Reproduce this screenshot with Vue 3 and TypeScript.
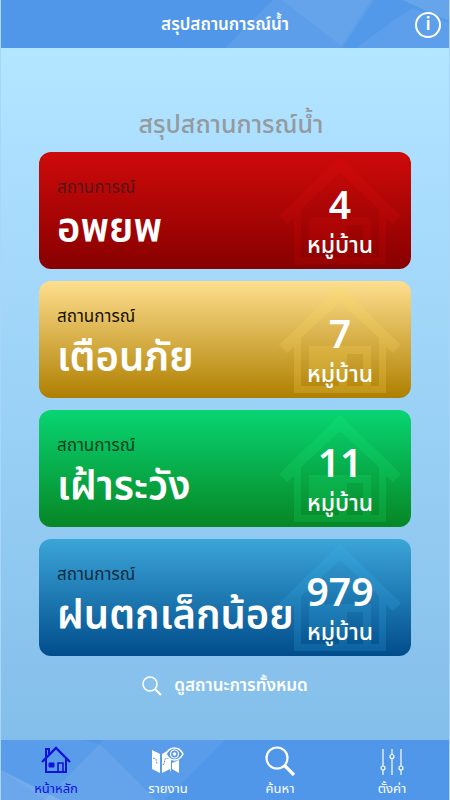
<script setup lang="ts">
import { ref } from 'vue'

interface Status {
  id: string
  name: string
  count: number
}

const statuses: Status[] = [
  { id: 'evacuate', name: 'อพยพ', count: 4 },
  { id: 'warning', name: 'เตือนภัย', count: 7 },
  { id: 'watch', name: 'เฝ้าระวัง', count: 11 },
  { id: 'rain', name: 'ฝนตกเล็กน้อย', count: 979 },
]

const tabs = [
  { id: 'home', label: 'หน้าหลัก' },
  { id: 'report', label: 'รายงาน' },
  { id: 'search', label: 'ค้นหา' },
  { id: 'settings', label: 'ตั้งค่า' },
]

const active = ref('home')
</script>

<template>
  <div class="app">
    <header class="bar">
      <svg class="facets" viewBox="0 0 450 48" preserveAspectRatio="none" aria-hidden="true">
        <path d="M225 48 273 0H375L343 48Z" fill="#fff" opacity=".07" />
        <path d="M282 0H372L342 46Z" fill="#fff" opacity=".06" />
        <path d="M343 48 375 0H450V48Z" fill="#fff" opacity=".02" />
        <path d="M357 48 395 20 414 8 450 23V48Z" fill="#fff" opacity=".06" />
        <path d="M403 0H450V21Z" fill="#fff" opacity=".12" />
      </svg>
      <h1 class="bar-title">สรุปสถานการณ์น้ำ</h1>
      <button class="info" type="button">i</button>
    </header>

    <main class="content">
      <h2 class="heading">สรุปสถานการณ์น้ำ</h2>

      <div class="cards">
        <article v-for="s in statuses" :key="s.id" class="card" :class="s.id">
          <svg class="house" viewBox="0 0 122 110" aria-hidden="true">
            <path d="M61 0 122 59 114 67 107 61V107H15V61L8 67 0 59ZM61 16 22 52V100H100V52Z" fill-rule="evenodd" />
            <path d="M30 60H92V100H84V68H68V100H60V92H30Z" fill-rule="evenodd" />
          </svg>
          <div class="info-text">
            <p class="caption">สถานการณ์</p>
            <p class="name">{{ s.name }}</p>
          </div>
          <div class="tally">
            <p class="count">{{ s.count }}</p>
            <p class="unit">หมู่บ้าน</p>
          </div>
        </article>
      </div>

      <button class="all" type="button">
        <svg width="20" height="20" viewBox="0 0 20 20" fill="none" stroke="currentColor" aria-hidden="true">
          <circle cx="8" cy="8" r="7" stroke-width="1.6" />
          <path d="M13 13 19 19" stroke-width="2.2" />
        </svg>
        <span>ดูสถานะการทั้งหมด</span>
      </button>
    </main>

    <nav class="tabs">
      <svg class="facets" viewBox="0 0 450 60" preserveAspectRatio="none" aria-hidden="true">
        <path d="M0 0H84L99 4 44 60 0 30Z" fill="#fff" opacity=".05" />
        <path d="M99 4 156 60H44Z" fill="#fff" opacity=".12" />
        <path d="M0 30 60 60H0Z" fill="#fff" opacity=".16" />
        <path d="M99 4 103 0H225L165 60H156Z" fill="#fff" opacity=".05" />
      </svg>
      <button
        v-for="t in tabs"
        :key="t.id"
        type="button"
        class="tab"
        :class="{ active: active === t.id }"
        @click="active = t.id"
      >
        <svg v-if="t.id === 'home'" width="32" height="32" viewBox="0 0 32 32" fill="none" stroke="currentColor" aria-hidden="true">
          <path d="M2 18 16 4 30 18" stroke-width="2.4" />
          <path d="M6 15V28H26V15M6 13V5H9V10" stroke-width="2" />
          <path d="M18 28V19H23V28" stroke-width="1.6" />
          <path d="M9 19H14V23H9Z" fill="currentColor" />
        </svg>
        <svg v-else-if="t.id === 'report'" width="32" height="32" viewBox="0 0 32 32" aria-hidden="true">
          <path d="M0 6 8 10V29L0 25ZM10 10 17 6C16 11 18 14 19 16V29L18 25 10 29ZM20 19 27 16V29L20 25Z" fill="currentColor" />
          <path d="M1 14 4 15 5 20M8 22 12 20 13 15 17 14" fill="none" stroke="#5598e8" stroke-width="1" stroke-dasharray="2 1" />
          <path d="M14 10C18 2 27 2 31 10C27 18 18 18 14 10Z" fill="#5598e8" stroke="currentColor" stroke-width="1.5" />
          <circle cx="22.5" cy="10" r="4" fill="none" stroke="currentColor" stroke-width="1.2" />
          <circle cx="22.5" cy="10" r="1.8" fill="currentColor" />
        </svg>
        <svg v-else-if="t.id === 'search'" width="32" height="32" viewBox="0 0 32 32" fill="none" stroke="currentColor" aria-hidden="true">
          <circle cx="13" cy="14" r="10.5" stroke-width="2.2" />
          <path d="M20 21 30 31" stroke-width="3.2" />
        </svg>
        <svg v-else width="32" height="32" viewBox="0 0 32 32" fill="none" stroke="currentColor" stroke-width="1.2" aria-hidden="true">
          <path d="M7 5V22M7 26V31M16 5V10M16 15V31M25 5V22M25 26V31" />
          <circle cx="7" cy="24" r="2" />
          <circle cx="16" cy="12.5" r="2" />
          <circle cx="25" cy="24" r="2" />
        </svg>
        <span>{{ t.label }}</span>
      </button>
    </nav>
  </div>
</template>

<style>
body {
  margin: 0;
}
</style>

<style scoped>
.app {
  box-sizing: border-box;
  min-height: 100vh;
  display: flex;
  flex-direction: column;
  border: solid #a9d5f8;
  border-width: 0 1px;
  background: linear-gradient(#b3e6ff 48px, #ade0ff 140px, #7fbbe8);
  font-family: "Noto Sans Thai", "Prompt", "Kanit", "Noto Sans", "Open Sans", sans-serif;
  color: #fff;
}

h1,
h2,
p {
  margin: 0;
}

button {
  padding: 0;
  border: 0;
  background: none;
  color: inherit;
  font: inherit;
  cursor: pointer;
}

.bar,
.tabs {
  position: relative;
  background: #5097e9;
}

.bar {
  box-sizing: border-box;
  height: 48px;
  display: grid;
  grid-template-columns: 1fr auto 1fr;
  align-items: center;
  padding: 2px 8px 0;
}

.facets {
  position: absolute;
  inset: 0;
  width: 100%;
  height: 100%;
}

.bar-title {
  position: relative;
  grid-column: 2;
  font-size: 17px;
  font-weight: 600;
  line-height: 24px;
}

.info {
  position: relative;
  justify-self: end;
  box-sizing: border-box;
  width: 26px;
  height: 26px;
  border: 2px solid #fff;
  border-radius: 50%;
  font-size: 18px;
  font-weight: 600;
  line-height: 20px;
}

.content {
  flex: 1;
  display: flex;
  flex-direction: column;
  padding: 61px 38px 0;
}

.heading {
  align-self: center;
  padding-left: 12px;
  color: #949a9e;
  font-size: 25px;
  font-weight: 500;
  line-height: 32px;
}

.cards {
  display: grid;
  grid-template-columns: minmax(0, 1fr);
  gap: 12px;
  margin-top: 11px;
}

.card {
  position: relative;
  box-sizing: border-box;
  height: 117px;
  display: grid;
  grid-template-columns: minmax(0, 1fr) 106px;
  padding: 24px 18px 8px;
  border-radius: 12px;
}

.evacuate {
  background: linear-gradient(#cf0a0a, #870000);
}

.warning {
  background: linear-gradient(#ffdf8f, #ae7f00);
}

.watch {
  background: linear-gradient(#08d572, #078625);
}

.rain {
  background: linear-gradient(#3ba5d8, #014d8b);
}

.house {
  position: absolute;
  right: 10px;
  top: 5px;
  width: 122px;
  height: 110px;
}

.evacuate .house {
  fill: #ff1010;
  opacity: 0.12;
}

.warning .house {
  fill: #ffe060;
  opacity: 0.2;
}

.watch .house {
  fill: #20ff80;
  opacity: 0.15;
}

.rain .house {
  fill: #40c0ff;
  opacity: 0.16;
}

.info-text,
.tally {
  position: relative;
  white-space: nowrap;
}

.caption {
  color: #102c40;
  font-size: 17px;
  font-weight: 400;
  line-height: 24px;
}

.evacuate .caption {
  color: #541616;
}

.warning .caption {
  color: #171000;
}

.watch .caption {
  color: #083f20;
}

.name {
  margin-top: 6px;
  font-size: 40px;
  font-weight: 600;
  line-height: 48px;
}

.tally {
  text-align: center;
}

.count {
  font-family: "Noto Sans", sans-serif;
  font-size: 39px;
  font-weight: 600;
  line-height: 56px;
}

.unit {
  margin-top: 2px;
  font-size: 23px;
  font-weight: 500;
  line-height: 24px;
}

.all {
  align-self: center;
  display: flex;
  align-items: center;
  gap: 12px;
  margin-top: 16px;
  font-size: 17px;
  font-weight: 600;
  line-height: 28px;
}

.tabs {
  display: grid;
  grid-template-columns: repeat(4, 1fr);
  height: 60px;
}

.tab {
  position: relative;
  display: flex;
  flex-direction: column;
  align-items: center;
  padding: 4px 2px 0 0;
  font-size: 13px;
  line-height: 26px;
}

.tab.active {
  color: #1212dc;
}
</style>
